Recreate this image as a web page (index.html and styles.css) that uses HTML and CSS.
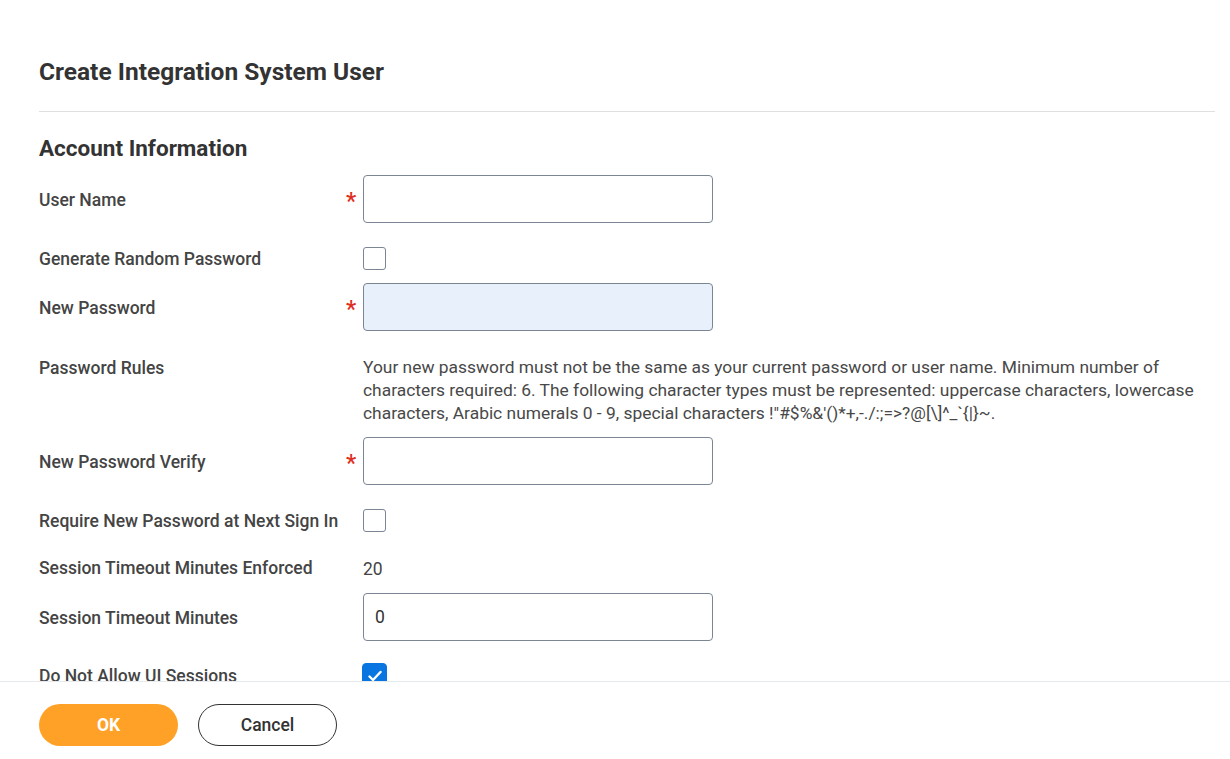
FILE: index.html
```html
<!DOCTYPE html>
<html>
<head>
<meta charset="utf-8">
<link rel="stylesheet" href="styles.css">
</head>
<body>
<div class="modal">
  <div class="content">
    <h1 class="title">Create Integration System User</h1>
    <div class="divider"></div>
    <h2 class="section">Account Information</h2>
    <div class="row r1">
      <div class="label">User Name</div>
      <div class="req">*</div>
      <div class="input"></div>
    </div>
    <div class="row r2">
      <div class="label">Generate Random Password</div>
      <div class="req"></div>
      <div class="checkbox"></div>
    </div>
    <div class="row r3">
      <div class="label">New Password</div>
      <div class="req">*</div>
      <div class="input filled"></div>
    </div>
    <div class="row r4 top">
      <div class="label">Password Rules</div>
      <div class="req"></div>
      <div class="rules">Your new password must not be the same as your current password or user name. Minimum number of characters required: 6. The following character types must be represented: uppercase characters, lowercase characters, Arabic numerals 0 - 9, special characters !"#$%&amp;'()*+,-./:;=&gt;?@[\]^_`{|}~.</div>
    </div>
    <div class="row r5">
      <div class="label">New Password Verify</div>
      <div class="req">*</div>
      <div class="input"></div>
    </div>
    <div class="row r6">
      <div class="label">Require New Password at Next Sign In</div>
      <div class="req"></div>
      <div class="checkbox"></div>
    </div>
    <div class="row r7">
      <div class="label">Session Timeout Minutes Enforced</div>
      <div class="req"></div>
      <div class="value">20</div>
    </div>
    <div class="row r8">
      <div class="label">Session Timeout Minutes</div>
      <div class="req"></div>
      <div class="input"><span class="val">0</span></div>
    </div>
    <div class="row r9">
      <div class="label">Do Not Allow UI Sessions</div>
      <div class="req"></div>
      <div class="checkbox checked">
        <svg viewBox="0 0 24 24" width="24" height="24"><path d="M6.5 12.5l3.5 3.5 7.5-8" fill="none" stroke="#fff" stroke-width="2.4" stroke-linecap="round" stroke-linejoin="round"/></svg>
      </div>
    </div>
  </div>
  <div class="footer">
    <button class="btn ok">OK</button>
    <button class="btn cancel">Cancel</button>
  </div>
</div>
</body>
</html>
```

FILE: styles.css
```css
* { box-sizing: border-box; }
html, body {
  margin: 0;
  padding: 0;
  background: #fff;
  font-family: Roboto, "Liberation Sans", sans-serif;
  color: #333;
}
.modal {
  width: 1230px;
  height: 759px;
  display: flex;
  flex-direction: column;
  overflow: hidden;
}
.content {
  height: 681px;
  flex: none;
  overflow: hidden;
  padding: 0 15px 0 39px;
}
.title {
  margin: 0;
  padding-top: 56px;
  font-size: 24.5px;
  line-height: 31px;
  font-weight: 700;
  color: #333;
}
.divider {
  height: 1px;
  background: #e0e0e0;
  margin-top: 24px;
}
.section {
  margin: 0;
  margin-top: 22px;
  font-size: 22.5px;
  line-height: 28px;
  font-weight: 700;
  color: #333;
}
.row {
  display: flex;
  align-items: center;
}
.row.top { align-items: flex-start; }
.label {
  width: 300px;
  flex: none;
  font-size: 17.5px;
  font-weight: 500;
  line-height: 23px;
  padding-top: 2px;
  color: #444;
  white-space: nowrap;
}
.req {
  width: 24px;
  flex: none;
  color: #de2e21;
  font-size: 23px;
  font-weight: 500;
  line-height: 22px;
  padding-left: 7px;
  height: 22px;
  position: relative;
  top: 3px;
}
.input {
  width: 350px;
  height: 48px;
  border: 1px solid #7b8594;
  border-radius: 4px;
  background: #fff;
  display: flex;
  align-items: center;
  padding-left: 11px;
}
.input.filled { background: #e8f0fc; }
.val { font-size: 17.5px; color: #333; }
.checkbox {
  width: 23px;
  height: 23px;
  border: 1px solid #7b8594;
  border-radius: 3px;
  background: #fff;
}
.checkbox.checked {
  width: 25px;
  height: 25px;
  margin-left: -1px;
  background: #0875e1;
  border-color: #0875e1;
  border-radius: 4px;
}
.checkbox svg { display: block; margin: 0; }
.rules {
  width: 852px;
  font-size: 17.4px;
  line-height: 23px;
  padding-top: 1px;
  color: #484848;
}
.value { font-size: 17.5px; color: #444; padding-top: 2px; }

.r1 { margin-top: 13px; }
.r2 { margin-top: 23px; }
.r3 { margin-top: 12px; }
.r4 { margin-top: 24px; }
.r5 { margin-top: 12px; }
.r6 { margin-top: 23px; }
.r7 { margin-top: 22px; }
.r8 { margin-top: 13px; }
.r9 { margin-top: 22px; }

.footer {
  height: 78px;
  flex: none;
  border-top: 1px solid #e6eaec;
  display: flex;
  align-items: flex-start;
  gap: 20px;
  padding: 22px 0 0 39px;
}
.btn {
  width: 139px;
  height: 42px;
  border-radius: 21px;
  font-family: Roboto, "Liberation Sans", sans-serif;
  font-size: 17.5px;
  cursor: pointer;
}
.ok {
  background: #ffa126;
  border: none;
  color: #fff;
  font-weight: 700;
}
.cancel {
  background: #fff;
  border: 1px solid #333;
  color: #333;
  font-weight: 500;
}
```
